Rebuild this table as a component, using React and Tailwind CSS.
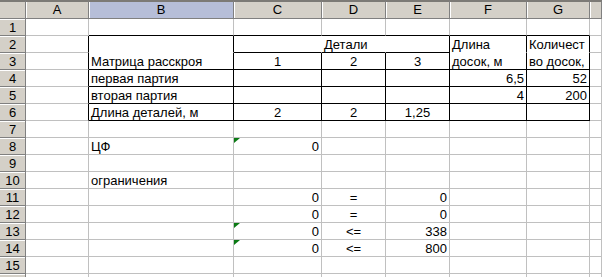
const COLS = ['A', 'B', 'C', 'D', 'E', 'F', 'G', '']

const c = (t = '', o = {}) => ({ t, ...o })
const k = { r: 'k', b: 'k' }
const edge = c('', { r: 'k' })

// rows 1..16, columns A..H
const ROWS = [
  [c(), c('', { b: 'k' }), c('', { b: 'k' }), c('', { b: 'k' }), c('', { b: 'k' }), c('', { b: 'k' }), c('', { b: 'k' }), c()],
  [edge, c('', { r: 'k', b: 'n' }), c('', { r: 'n', b: 'k' }), c('Детали', { r: 'n', b: 'k' }), c('', k), c('Длина', { r: 'k', b: 'n' }), c('Количест', { r: 'k', b: 'n' }), c()],
  [edge, c('Матрица расскроя', k), c('1', { ...k, a: 'c' }), c('2', { ...k, a: 'c' }), c('3', { ...k, a: 'c' }), c('досок, м', k), c('во досок,', k), c()],
  [edge, c('первая партия', k), c('', k), c('', k), c('', k), c('6,5', { ...k, a: 'r' }), c('52', { ...k, a: 'r' }), c()],
  [edge, c('вторая партия', k), c('', k), c('', k), c('', k), c('4', { ...k, a: 'r' }), c('200', { ...k, a: 'r' }), c()],
  [edge, c('Длина деталей, м', k), c('2', { ...k, a: 'c' }), c('2', { ...k, a: 'c' }), c('1,25', { ...k, a: 'c' }), c('', k), c('', k), c()],
  [c(), c(), c(), c(), c(), c(), c(), c()],
  [c(), c('ЦФ'), c('0', { a: 'r', tri: true }), c(), c(), c(), c(), c()],
  [c(), c(), c(), c(), c(), c(), c(), c()],
  [c(), c('ограничения'), c(), c(), c(), c(), c(), c()],
  [c(), c(), c('0', { a: 'r' }), c('=', { a: 'c' }), c('0', { a: 'r' }), c(), c(), c()],
  [c(), c(), c('0', { a: 'r' }), c('=', { a: 'c' }), c('0', { a: 'r' }), c(), c(), c()],
  [c(), c(), c('0', { a: 'r', tri: true }), c('<=', { a: 'c' }), c('338', { a: 'r' }), c(), c(), c()],
  [c(), c(), c('0', { a: 'r', tri: true }), c('<=', { a: 'c' }), c('800', { a: 'r' }), c(), c(), c()],
  [c(), c(), c(), c(), c(), c(), c(), c()],
  [c(), c(), c(), c(), c(), c(), c(), c()],
]

const rightColor = { k: 'border-r-black', n: 'border-r-white' }
const bottomColor = { k: 'border-b-black', n: 'border-b-white' }
const alignClass = { c: 'justify-center', r: 'justify-end' }

function Cell({ cell }) {
  return (
    <div
      className={`relative flex items-end px-[2px] border-r border-b border-[#c0c0c0] whitespace-nowrap leading-[15px] ${rightColor[cell.r] || ''} ${bottomColor[cell.b] || ''} ${alignClass[cell.a] || 'justify-start'}`}
    >
      {cell.tri && (
        <svg className="absolute top-0 left-0" width="6" height="6" viewBox="0 0 6 6">
          <polygon points="0,0 6,0 0,5" fill="#0a7a14" />
        </svg>
      )}
      <span>{cell.t}</span>
    </div>
  )
}

export default function App() {
  return (
    <div
      className="w-[602px] h-[277px] overflow-hidden bg-white text-[13px] text-black"
      style={{ fontFamily: '"Liberation Sans", Arial, sans-serif' }}
    >
      <div className="grid grid-cols-[26px_63px_145px_88px_64px_64px_77px_63px_1fr] grid-rows-[19px_repeat(16,17px)]">
        <div className="bg-[#d4d0c8] border-t-2 border-t-[#7c7a76] border-r border-b border-r-[#808080] border-b-[#808080]" />
        {COLS.map((col) => (
          <div
            key={col || 'H'}
            className={`flex items-center justify-center border-t-2 border-t-[#7c7a76] border-r border-b border-r-[#808080] border-b-[#808080] shadow-[inset_1px_0_0_#ffffff] ${col === 'B' ? 'bg-[#b6bed8]' : 'bg-[#d4d0c8]'}`}
          >
            {col}
          </div>
        ))}
        {ROWS.map((row, i) => (
          <div key={i} className="contents">
            <div className="flex items-center justify-center bg-[#d4d0c8] border-r border-b border-[#808080] shadow-[inset_0_1px_0_#ffffff] leading-none">
              {i < 15 ? i + 1 : ''}
            </div>
            {row.map((cell, j) => (
              <Cell key={j} cell={cell} />
            ))}
          </div>
        ))}
      </div>
    </div>
  )
}
